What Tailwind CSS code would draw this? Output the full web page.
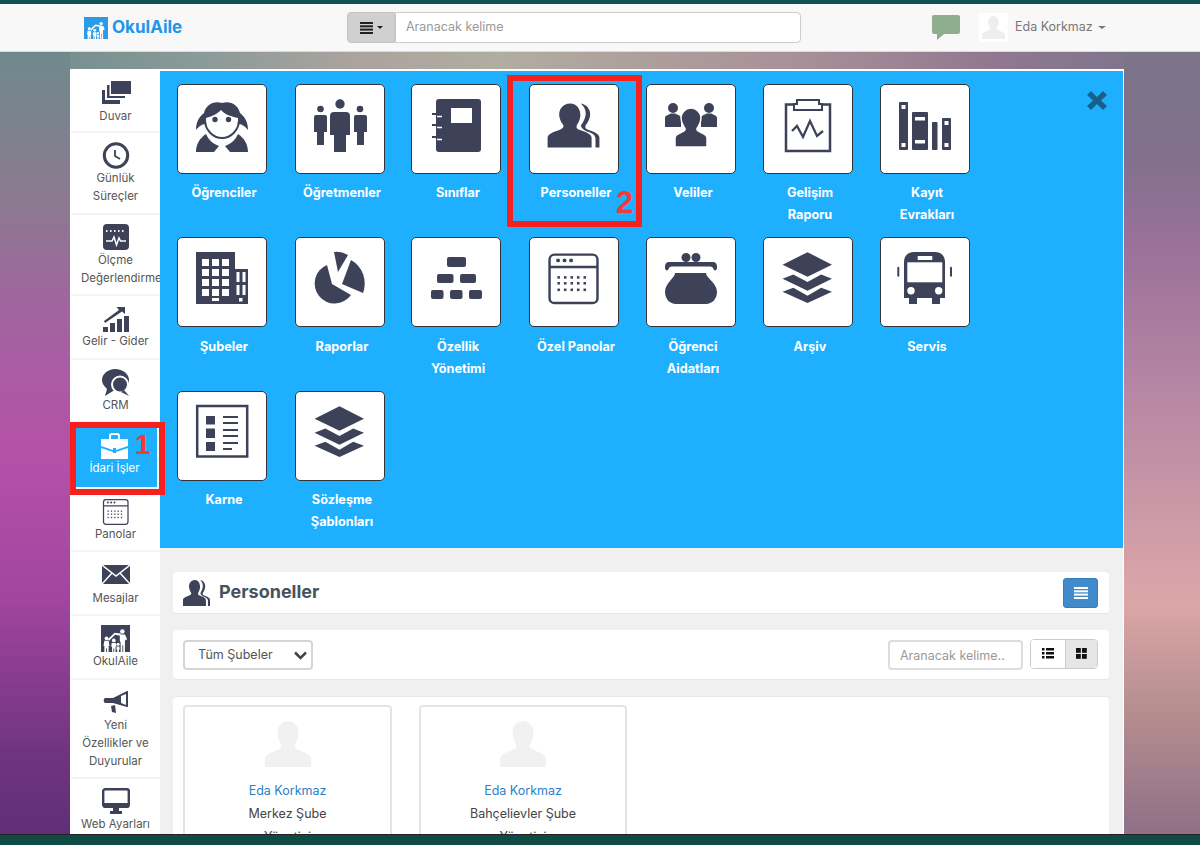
<!DOCTYPE html>
<html lang="tr">
<head>
<meta charset="utf-8">
<title>OkulAile</title>
<script src="https://cdn.jsdelivr.net/npm/@tailwindcss/browser@4"></script>
</head>
<body class="[font-family:Inter,sans-serif]">
<svg width="0" height="0" class="absolute">
  <defs>
    <symbol id="staff" viewBox="0 0 90 90">
      <path d="M18 64V54C18 50 24 48 30 46C33 45 35 43 34 41C31.500 38 30.500 35 30 32C29 26 33 19 41 19C48 19 52 25 51.500 32C51 35 50 38 48 41C47 44 48 45 51 46C57 48 63 50 63 54V64Z"/>
      <path d="M52 19C58 20 62 25 61.500 31C61 35 59 39 57 41C56 44 57 45 60 46C66 48 71 50 71 54V64H67V55C67 50 62 49 57 47C53 45 51 42 53 40C55 37 57 33 57 29C57 25 55 22 52 19Z"/>
    </symbol>
    <symbol id="layers" viewBox="0 0 90 90">
      <path d="M44.500 14.500L69.500 27.300L44.500 39.700L19 27.300Z"/>
      <path d="M19 41.700L30 37.300L44.500 45L58.500 37.300L69.500 41.700L44.500 54Z"/>
      <path d="M19 55L30 51L44.500 59L58.500 51L69.500 55L44.500 66.500Z"/>
    </symbol>
    <symbol id="person" viewBox="0 0 46 46">
      <path d="M0 46V38C0 33 8 31 14 28C17 26.500 17 24 15.500 22C13.500 19 12.500 15 12.500 11C12.500 5 17 0 23 0C29 0 33.500 5 33.500 11C33.500 15 32.500 19 30.500 22C29 24 29 26.500 32 28C38 31 46 33 46 38V46Z"/>
    </symbol>
    <symbol id="family" viewBox="0 0 30 28">
      <circle cx="4.500" cy="12" r="2.200"/><path d="M2 15H7L8 21H7V28H5V24H4V28H2V21H1Z"/>
      <path d="M6 13L14 5.500L21 6.500V9L14.500 8L7.500 15Z"/>
      <circle cx="13" cy="14.500" r="2.200"/><path d="M10.500 17.500H15.500L16 22H15V28H13.500V24H12.500V28H11V22H10Z"/>
      <circle cx="18" cy="19" r="1.800"/><path d="M16.500 21.500H19.500L20 25H19V28H17V25H16Z"/>
      <circle cx="23" cy="4" r="2.600"/><path d="M20 7.500H26L28.500 13L27 14.500L26 13V28H24V20H23V28H21V17L20 15Z"/>
    </symbol>
    <symbol id="calendar" viewBox="0 0 90 90">
      <rect x="20" y="17" width="49" height="49.500" rx="5" fill="none" stroke="currentColor" stroke-width="2.500"/>
      <path d="M20 29.700H69" stroke="currentColor" stroke-width="2.500"/>
      <circle cx="28.700" cy="22.900" r="2"/><circle cx="35.300" cy="22.900" r="2"/><circle cx="42" cy="22.900" r="2"/>
      <g>
        <rect x="28" y="39" width="2.600" height="2.600"/><rect x="34.700" y="39" width="2.600" height="2.600"/><rect x="41.400" y="39" width="2.600" height="2.600"/><rect x="48" y="39" width="2.600" height="2.600"/><rect x="54.700" y="39" width="2.600" height="2.600"/>
        <rect x="28" y="45" width="2.600" height="2.600"/><rect x="34.700" y="45" width="2.600" height="2.600"/><rect x="41.400" y="45" width="2.600" height="2.600"/><rect x="48" y="45" width="2.600" height="2.600"/><rect x="54.700" y="45" width="2.600" height="2.600"/>
        <rect x="28" y="51.700" width="2.600" height="2.600"/><rect x="34.700" y="51.700" width="2.600" height="2.600"/><rect x="41.400" y="51.700" width="2.600" height="2.600"/><rect x="48" y="51.700" width="2.600" height="2.600"/><rect x="54.700" y="51.700" width="2.600" height="2.600"/>
      </g>
    </symbol>
  </defs>
</svg>

<div class="relative flex h-[845px] w-[1200px] flex-col overflow-hidden">
  <div class="h-[4px] shrink-0 bg-[#0e5056]"></div>

  <nav class="flex h-[48px] shrink-0 items-center border-b border-[#dcdcdc] bg-[#f8f8f8]">
    <div class="ml-[84px] flex w-[263px] items-center gap-[4px]">
      <span class="relative block h-[22px] w-[24px] overflow-hidden bg-[#2b9be8]">
        <svg class="absolute bottom-0 left-0 h-[18px] w-[24px] fill-white"><use href="#family"/></svg>
      </span>
      <span class="text-[17px] leading-none font-bold text-[#1f97e8]">OkulAile</span>
    </div>
    <div class="flex h-[31px] w-[454px]">
      <div class="flex w-[48px] items-center justify-center gap-[4px] rounded-l-[4px] border border-[#c4c4c4] bg-[#d0d0d0]">
        <svg width="13" height="12" viewBox="0 0 13 12" class="fill-[#222]"><rect width="13" height="2" /><rect y="3.300" width="13" height="2"/><rect y="6.600" width="13" height="2"/><rect y="10" width="13" height="2"/></svg>
        <span class="h-0 w-0 border-x-[3px] border-t-[3px] border-x-transparent border-t-[#222]"></span>
      </div>
      <input placeholder="Aranacak kelime" class="w-[406px] rounded-r-[4px] border border-[#ccc] bg-white px-[10px] text-[12.500px] outline-none placeholder:text-[#999]">
    </div>
    <svg class="ml-[131px] fill-[#8fae90]" width="28" height="25" viewBox="0 0 28 25"><path d="M2 0H26A2 2 0 0 1 28 2V17A2 2 0 0 1 26 19H12L5 25V19H2A2 2 0 0 1 0 17V2A2 2 0 0 1 2 0Z"/></svg>
    <div class="ml-[19px] flex h-[29px] w-[29px] items-end justify-center bg-white pb-[3px]">
      <svg class="h-[23px] w-[23px] fill-[#eee]"><use href="#person"/></svg>
    </div>
    <span class="ml-[7px] text-[12.500px] text-[#777]">Eda Korkmaz</span>
    <span class="ml-[5px] h-0 w-0 border-x-[4px] border-t-[3px] border-x-transparent border-t-[#777]"></span>
  </nav>

  <main class="min-h-0 flex-1 bg-[linear-gradient(90deg,#6f8a8c_0px,#8a9a98_200px,#aaa39e_350px,#b1ada0_500px,#a89098_800px,#8f7890_1000px,#76738a_1200px)] pl-[70px] pt-[17px]">
    <div class="relative h-[765px] w-[1054px]">
      <div class="absolute -left-[70px] -top-[17px] h-[782px] w-[70px] bg-[linear-gradient(180deg,#6f8a8c_0px,#8c7a90_150px,#a0659f_250px,#b651a8_400px,#a045a0_550px,#70347f_700px,#5f2f78_782px)]"></div>
      <div class="absolute -right-[76px] -top-[17px] h-[782px] w-[76px] bg-[linear-gradient(180deg,#7c7488_0px,#80708c_100px,#9a709a_190px,#b888a4_350px,#dca6a8_550px,#b89090_650px,#8f7088_782px)]"></div>

      <div class="relative flex h-[765px] w-[1054px] overflow-hidden border-x border-t-2 border-x-white border-t-white bg-[#f0f0f0]">
        <aside class="w-[89px] shrink-0 bg-white text-[11.500px] leading-[18px] whitespace-nowrap text-[#555]">
          <div class="h-[62px] border-b-2 border-[#f3f3f3] px-[10px] pt-[9px] text-center">
            <svg class="mx-auto h-[27px] w-[32px] fill-[#3d4258]" viewBox="0 0 32 27"><path d="M11 1H31V14H11Z"/><path d="M7 5H9.500V16H25V18H7Z"/><path d="M2 10H5V20H20V24H2Z"/></svg>
            <div>Duvar</div>
          </div>
          <div class="h-[82px] border-b-2 border-[#f3f3f3] px-[10px] pt-[9px] text-center">
            <svg class="mx-auto h-[27px] w-[28px]" viewBox="0 0 28 27"><circle cx="14" cy="13.500" r="11.700" fill="#fff" stroke="#3d4258" stroke-width="3"/><path d="M13 8V14L18 17" fill="none" stroke="#3d4258" stroke-width="1.800"/></svg>
            <div>Günlük<br>Süreçler</div>
          </div>
          <div class="h-[81px] border-b-2 border-[#f3f3f3] px-[10px] pt-[9px] text-center">
            <svg class="mx-auto h-[27px] w-[28px]" viewBox="0 0 28 27"><rect x="1" y="0" width="26" height="26" rx="4" fill="#3d4258"/><path d="M4 17H10L12 13L14.500 21L17 14L18.500 17H24" fill="none" stroke="#fff" stroke-width="1.500"/><path d="M4 7H24" stroke="#fff" stroke-width="2" stroke-dasharray="1.500 2.500"/></svg>
            <div>Ölçme</div><div>Değerlendirme</div>
          </div>
          <div class="h-[64px] border-b-2 border-[#f3f3f3] px-[10px] pt-[9px] text-center">
            <svg class="mx-auto h-[27px] w-[28px] fill-[#3d4258]" viewBox="0 0 28 27"><rect x="1" y="22" width="5" height="6"/><rect x="8" y="18" width="5" height="10"/><rect x="15" y="14" width="5" height="14"/><rect x="22" y="11" width="5" height="17"/><path d="M2 16L17 5L14.500 2H23V9L20 6.500L3 18Z"/></svg>
            <div>Gelir - Gider</div>
          </div>
          <div class="h-[63px] border-b-2 border-[#f3f3f3] px-[10px] pt-[9px] text-center">
            <svg class="mx-auto h-[27px] w-[28px]" viewBox="0 0 28 27"><path d="M13 0C21 0 27 5 27 11C27 18 20 22 13 22L11 22L3 27L5 20C2 17 0 14.500 0 11C0 5 6 0 13 0Z" fill="#3d4258"/><circle cx="18" cy="15.500" r="8" fill="#3d4258" stroke="#fff" stroke-width="2"/><path d="M22 21L27 27L19 23Z" fill="#3d4258"/></svg>
            <div>CRM</div>
          </div>
          <div class="flex h-[67px] flex-col items-center justify-end border-b-2 border-[#f3f3f3] pb-[1px]">
            <div class="flex h-[60px] w-[83px] flex-col items-center bg-[#1eb0ff] pt-[6px] text-white">
              <svg class="h-[26px] w-[29px] -translate-x-[1px] fill-white" viewBox="0 0 29 26"><path d="M9 6V3C9 1 10 0 12 0H17C19 0 20 1 20 3V6H18V3C18 2.500 17.500 2 17 2H12C11.500 2 11 2.500 11 3V6Z"/><path d="M1 6H28V13L16 17V15H13V17L1 13Z"/><path d="M1 15L13 19V20H16V19L28 15V26H1Z"/></svg>
              <div class="-translate-x-[1px]">İdari İşler</div>
            </div>
          </div>
          <div class="h-[62px] border-b-2 border-[#f3f3f3] px-[10px] pt-[8px] text-center">
            <svg class="mx-auto h-[27px] w-[30px] fill-[#3d4258] text-[#3d4258]" viewBox="17 14 56 54"><use href="#calendar" x="0" y="0" width="90" height="90"/></svg>
            <div>Panolar</div>
          </div>
          <div class="h-[64px] border-b-2 border-[#f3f3f3] px-[10px] pt-[9px] text-center">
            <svg class="mx-auto h-[27px] w-[28px]" viewBox="0 0 28 27"><path d="M0 4H28V23H0Z" fill="#3d4258"/><path d="M0 4L14 15L28 4M0 23L10 12M28 23L18 12" fill="none" stroke="#fff" stroke-width="1.500"/></svg>
            <div class="mt-[1px]">Mesajlar</div>
          </div>
          <div class="h-[64px] border-b-2 border-[#f3f3f3] px-[10px] pt-[9px] text-center">
            <div class="relative mx-auto h-[27px] w-[29px] overflow-hidden bg-[#3d4258]">
              <svg class="absolute bottom-0 left-0 h-[24px] w-[29px] fill-white"><use href="#family"/></svg>
            </div>
            <div>OkulAile</div>
          </div>
          <div class="h-[99px] border-b-2 border-[#f3f3f3] px-[10px] pt-[11px] text-center">
            <svg class="mx-auto h-[24px] w-[26px] fill-[#3d4258]" viewBox="0 0 26 24"><path d="M2 7H10L24 0H25V16H24L10 12H2A3 3 0 0 1 2 7Z"/><path d="M18 5L23 3V14L18 12Z" fill="#fff"/><path d="M8 15L12 14L13 22L9 21Z"/></svg>
            <div class="mt-[1px]">Yeni<br>Özellikler ve<br>Duyurular</div>
          </div>
          <div class="px-[10px] pt-[9px] text-center">
            <svg class="mx-auto h-[27px] w-[28px] fill-[#3d4258]" viewBox="0 0 28 27"><rect x="1.200" y="1.200" width="25.600" height="17.600" rx="2" fill="#fff" stroke="#3d4258" stroke-width="2.400"/><path d="M1 15H27V18A2 2 0 0 1 25 20H3A2 2 0 0 1 1 18Z"/><path d="M11 20H17V23H20V26H8V23H11Z"/></svg>
            <div>Web Ayarları</div>
          </div>
        </aside>

        <div class="min-w-0 flex-1">
          <section class="relative h-[477px] bg-[#1eb0ff] pl-[17px] pt-[13px] text-[12.700px] leading-[22px] font-bold text-white">
            <div class="grid grid-cols-[118px_116px_118px_117px_117px_117px_117px] grid-rows-[153px_154px_auto]">
              <div><div class="h-[90px] w-[90px] rounded-[5px] border border-[#33333a] bg-white"><svg class="h-full w-full fill-[#3d4258]" viewBox="1 1 88 88"><path d="M45 19C36 16.500 29 21 27 29C22 33 19 38 19 46C23 41 26 40 29 40H61C64 40 67 41 71 46C71 38 68 33 63 29C61 21 54 16.500 45 19Z"/><path d="M29 34C33 33 39 31 44 26C48 31 56 33 61 34C62 44 55 53 45 53C36 53 28 44 29 34Z" fill="#fff"/><path d="M28 36C28 46 36 54 45 54C54 54 62 46 62 36" fill="none" stroke="#3d4258" stroke-width="2"/><circle cx="38" cy="35.500" r="2.700"/><circle cx="51.500" cy="35.500" r="2.700"/><path d="M19 68C19 60 23 54 29 50C31 55 36 60 42 62L37 68Z"/><path d="M71 68C71 60 67 54 61 50C59 55 54 60 48 62L53 68Z"/></svg></div><div class="mt-[8px] w-[94px] text-center">Öğrenciler</div></div>
              <div><div class="h-[90px] w-[90px] rounded-[5px] border border-[#33333a] bg-white"><svg class="h-full w-full fill-[#3d4258]" viewBox="0 1 88 88"><circle cx="44" cy="20" r="4.700"/><path d="M38 28H50A4 4 0 0 1 54 32V51H50V68H38V51H34V32A4 4 0 0 1 38 28Z"/><circle cx="24.500" cy="25" r="3.300"/><path d="M20 31H29A2 2 0 0 1 31 33V48H28V61H21V48H18V33A2 2 0 0 1 20 31Z"/><circle cx="64" cy="25" r="3.300"/><path d="M60 31H69A2 2 0 0 1 71 33V48H68V61H61V48H58V33A2 2 0 0 1 60 31Z"/></svg></div><div class="mt-[8px] w-[94px] text-center">Öğretmenler</div></div>
              <div><div class="h-[90px] w-[90px] rounded-[5px] border border-[#33333a] bg-white"><svg class="h-full w-full fill-[#3d4258]" viewBox="1 1 88 88"><rect x="25" y="15" width="45" height="53" rx="3"/><rect x="40" y="24" width="21" height="15" fill="#fff"/><path d="M21 30H31M21 41H31M21 53H31" stroke="#3d4258" stroke-width="2"/><path d="M26 32.500H31M26 43.500H31M26 55.500H31" stroke="#fff" stroke-width="1.500"/></svg></div><div class="mt-[8px] w-[94px] text-center">Sınıflar</div></div>
              <div><div class="h-[90px] w-[90px] rounded-[5px] border border-[#33333a] bg-white"><svg class="h-full w-full fill-[#3d4258]"><use href="#staff"/></svg></div><div class="mt-[8px] w-[94px] text-center">Personeller</div></div>
              <div><div class="h-[90px] w-[90px] rounded-[5px] border border-[#33333a] bg-white"><svg class="h-full w-full fill-[#3d4258]" viewBox="1 1 88 88"><circle cx="27" cy="24" r="5"/><path d="M19 43V34C19 31 23 31 24.500 29.500H29.500C31 31 35 31 35 34L35 43Z"/><circle cx="63" cy="24" r="5"/><path d="M71 43V34C71 31 67 31 65.500 29.500H60.500C59 31 55 31 55 34L55 43Z"/><path d="M29 63V54C29 50 35 49 38 47C39.500 46 39.500 44 38 43C36 40 35 36 35 34C35 29 39 24 45 24C51 24 55 29 55 34C55 36 54 40 52 43C50.500 44 50.500 46 52 47C55 49 61 50 61 54V63Z" stroke="#fff" stroke-width="1.500"/></svg></div><div class="mt-[8px] w-[94px] text-center">Veliler</div></div>
              <div><div class="h-[90px] w-[90px] rounded-[5px] border border-[#33333a] bg-white"><svg class="h-full w-full" viewBox="1 1 88 88" fill="none" stroke="#3d4258"><path d="M30 20.500H23V67H67V20.500H60" stroke-width="2.500"/><path d="M34 16H56V20H59V26H31V20H34Z" stroke-width="2"/><path d="M29 47L34 42L40 53L47 37L54 52L60 47" stroke-width="2.300"/></svg></div><div class="mt-[8px] w-[94px] text-center">Gelişim<br>Raporu</div></div>
              <div><div class="h-[90px] w-[90px] rounded-[5px] border border-[#33333a] bg-white"><svg class="h-full w-full fill-[#3d4258]" viewBox="1 1 88 88"><rect x="19" y="18" width="9" height="48" rx="1"/><rect x="32" y="28" width="16" height="38" rx="1"/><rect x="52" y="38" width="5.500" height="28" rx="1"/><rect x="62" y="34" width="9" height="32" rx="1"/><rect x="21.500" y="21" width="4" height="4" fill="#fff"/><rect x="21.500" y="59" width="4" height="4" fill="#fff"/><rect x="35" y="33" width="10" height="3.500" fill="#fff"/><rect x="35" y="56" width="10" height="3.500" fill="#fff"/><rect x="64.500" y="37" width="4" height="4" fill="#fff"/><rect x="64.500" y="59" width="4" height="4" fill="#fff"/></svg></div><div class="mt-[8px] w-[94px] text-center">Kayıt<br>Evrakları</div></div>

              <div><div class="h-[90px] w-[90px] rounded-[5px] border border-[#33333a] bg-white"><svg class="h-full w-full fill-[#3d4258]" viewBox="1 1 88 88"><path d="M19 15H58V32H71V67H19Z"/><g fill="#fff"><rect x="25" y="22" width="7" height="7"/><rect x="35" y="22" width="7" height="7"/><rect x="45" y="22" width="7" height="7"/><rect x="25" y="32" width="7" height="7"/><rect x="35" y="32" width="7" height="7"/><rect x="45" y="32" width="7" height="7"/><rect x="25" y="42" width="7" height="7"/><rect x="35" y="42" width="7" height="7"/><rect x="45" y="42" width="7" height="7"/><rect x="25" y="52" width="7" height="7"/><rect x="35" y="52" width="7" height="7"/><rect x="45" y="52" width="7" height="7"/><rect x="35" y="61" width="7" height="3"/><rect x="59.500" y="35" width="3" height="10"/><rect x="65.500" y="35" width="3" height="10"/><rect x="59.500" y="48" width="3" height="10"/><rect x="65.500" y="48" width="3" height="10"/><rect x="62" y="61" width="3.500" height="3.500"/></g></svg></div><div class="mt-[9px] w-[94px] text-center">Şubeler</div></div>
              <div><div class="h-[90px] w-[90px] rounded-[5px] border border-[#33333a] bg-white"><svg class="h-full w-full fill-[#3d4258]" viewBox="0 1 88 88"><path d="M36 47L31 28A20 20 0 1 0 55 58Z"/><path d="M55 23A27 27 0 0 1 67 56L46 47Z"/><path d="M38 15Q45 14 52 18L42 35Z"/></svg></div><div class="mt-[9px] w-[94px] text-center">Raporlar</div></div>
              <div><div class="h-[90px] w-[90px] rounded-[5px] border border-[#33333a] bg-white"><svg class="h-full w-full fill-[#3d4258]" viewBox="1 1 88 88"><rect x="36" y="20" width="19" height="10" rx="2"/><rect x="26" y="37" width="16.500" height="9" rx="2"/><rect x="49" y="37" width="16" height="9" rx="2"/><rect x="20" y="53" width="12.500" height="9" rx="2"/><rect x="39" y="53" width="12.500" height="9" rx="2"/><rect x="58" y="53" width="13" height="9" rx="2"/></svg></div><div class="mt-[9px] w-[94px] text-center">Özellik<br>Yönetimi</div></div>
              <div><div class="h-[90px] w-[90px] rounded-[5px] border border-[#33333a] bg-white"><svg class="h-full w-full fill-[#3d4258] text-[#3d4258]"><use href="#calendar"/></svg></div><div class="mt-[9px] w-[94px] text-center">Özel Panolar</div></div>
              <div><div class="h-[90px] w-[90px] rounded-[5px] border border-[#33333a] bg-white"><svg class="h-full w-full fill-[#3d4258]" viewBox="1 1 88 88"><circle cx="40" cy="20.500" r="4.500"/><circle cx="50" cy="20.500" r="4.500"/><path d="M23 25H67C69.500 25 71 27 71 29.500V31C71 33 69 34 68 33C67 30.500 66 29.500 64 29.500H26C24 29.500 23 30.500 22 33C21 34 19 33 19 31V29.500C19 27 20.500 25 23 25Z"/><path d="M29 36H60C60 41 71 46 71 55C71 62 66 67 60 67H30C24 67 19 62 19 55C19 46 29 41 29 36Z"/></svg></div><div class="mt-[9px] w-[94px] text-center">Öğrenci<br>Aidatları</div></div>
              <div><div class="h-[90px] w-[90px] rounded-[5px] border border-[#33333a] bg-white"><svg class="h-full w-full fill-[#3d4258]"><use href="#layers"/></svg></div><div class="mt-[9px] w-[94px] text-center">Arşiv</div></div>
              <div><div class="h-[90px] w-[90px] rounded-[5px] border border-[#33333a] bg-white"><svg class="h-full w-full fill-[#3d4258]" viewBox="1 1 88 88"><path d="M34 15H55C61 15 65 19 65 25V61H60V67H52V61H37V67H29V61H24V25C24 19 28 15 34 15Z"/><rect x="27.300" y="25.300" width="35" height="20" fill="#fff"/><rect x="37.700" y="19" width="14.600" height="4" fill="#fff"/><circle cx="31" cy="53.700" r="3.700" fill="#fff"/><circle cx="58.700" cy="53.700" r="3.700" fill="#fff"/><rect x="17.300" y="29.700" width="2" height="10" rx="1"/><rect x="70" y="29.700" width="2" height="10" rx="1"/></svg></div><div class="mt-[9px] w-[94px] text-center">Servis</div></div>

              <div><div class="h-[90px] w-[90px] rounded-[5px] border border-[#33333a] bg-white"><svg class="h-full w-full" viewBox="1 1 88 88" fill="#3d4258"><rect x="20.200" y="15" width="50" height="50.500" fill="none" stroke="#3d4258" stroke-width="2.500"/><rect x="29" y="25" width="9" height="8.500"/><rect x="29" y="37.500" width="9" height="9.500"/><rect x="29" y="51" width="9" height="9"/><path d="M46 26H61M46 32H61M46 39H61M46 45H61M46 52H61M46 58H55" stroke="#3d4258" stroke-width="2"/></svg></div><div class="mt-[8px] w-[94px] text-center">Karne</div></div>
              <div><div class="h-[90px] w-[90px] rounded-[5px] border border-[#33333a] bg-white"><svg class="h-full w-full fill-[#3d4258]"><use href="#layers"/></svg></div><div class="mt-[8px] w-[94px] text-center">Sözleşme<br>Şablonları</div></div>
            </div>
            <svg class="absolute right-[16px] top-[20px] fill-[#1a5f8c]" width="20" height="19" viewBox="0 0 20 19"><path d="M4 0L10 6L16 0L20 4L14 9.500L20 15L16 19L10 13L4 19L0 15L6 9.500L0 4Z"/></svg>
          </section>

          <section class="flex flex-col gap-[16px] px-[13px] pt-[24px] text-[12.500px] text-[#444]">
            <div class="flex h-[42px] w-[936px] items-center justify-between rounded-[4px] border-b border-[#e6e6e6] bg-white pl-[10px] pr-[11px]">
              <div class="flex items-center gap-[9px]">
                <svg class="h-[26px] w-[27px] fill-[#3d4258]" viewBox="18 19 53 45" preserveAspectRatio="none"><use href="#staff" width="90" height="90"/></svg>
                <span class="pb-[2px] text-[18px] font-bold text-[#46535b]">Personeller</span>
              </div>
              <div class="flex h-[30px] w-[35px] items-center justify-center rounded-[3px] border border-[#357ebd] bg-[#428bca]">
                <svg width="14" height="12" viewBox="0 0 14 12" class="fill-white"><rect width="14" height="2"/><rect y="3.300" width="14" height="2"/><rect y="6.600" width="14" height="2"/><rect y="10" width="14" height="2"/></svg>
              </div>
            </div>
            <div class="flex h-[50px] w-[936px] items-center rounded-[4px] border-b border-[#e6e6e6] bg-white pl-[10px] pr-[11px]">
              <div class="flex h-[30px] w-[130px] items-center justify-between rounded-[4px] border-2 border-[#d5d5d5] pl-[13px] pr-[4px] pt-[1px] text-[#555]">
                <span>Tüm Şubeler</span>
                <svg width="13" height="9" viewBox="0 0 13 9" fill="none" stroke="#444" stroke-width="2.500"><path d="M1 1.500L6.500 7L12 1.500"/></svg>
              </div>
              <input placeholder="Aranacak kelime.." class="ml-auto h-[30px] w-[135px] rounded-[4px] border-2 border-[#ddd] bg-white px-[10px] pt-[1px] text-[12.500px] outline-none placeholder:text-[#999]">
              <div class="ml-[7px] flex h-[30px] w-[68px] -translate-y-[1px] overflow-hidden rounded-[4px] border border-[#ccc]">
                <div class="flex w-[34px] items-center justify-center bg-white">
                  <svg width="12" height="11" viewBox="0 0 12 11" class="fill-[#111]"><rect width="2.500" height="2.500"/><rect x="4" width="8" height="2.500"/><rect y="4" width="2.500" height="2.500"/><rect x="4" y="4" width="8" height="2.500"/><rect y="8" width="2.500" height="2.500"/><rect x="4" y="8" width="8" height="2.500"/></svg>
                </div>
                <div class="flex flex-1 items-center justify-center border-l border-[#ccc] bg-[#e6e6e6]">
                  <svg width="11" height="11" viewBox="0 0 11 11" class="fill-[#111]"><rect width="4.800" height="4.800"/><rect x="6" width="4.800" height="4.800"/><rect y="6" width="4.800" height="4.800"/><rect x="6" y="6" width="4.800" height="4.800"/></svg>
                </div>
              </div>
            </div>
            <div class="flex h-[200px] w-[936px] gap-[27px] rounded-[4px] border-t border-[#e8e8e8] bg-white pl-[10px] pt-[8px] text-center leading-[23px]">
              <div class="h-[150px] w-[209px] rounded-t-[4px] border-2 border-[#e4e4e4] pt-[14px]">
                <svg class="mx-auto h-[46px] w-[46px] fill-[#f1f1f1]"><use href="#person"/></svg>
                <div class="mt-[12px] text-[#2a7fc9]">Eda Korkmaz</div>
                <div>Merkez Şube</div>
                <div>Yönetici</div>
              </div>
              <div class="h-[150px] w-[208px] rounded-t-[4px] border-2 border-[#e4e4e4] pt-[14px]">
                <svg class="mx-auto h-[46px] w-[46px] fill-[#f1f1f1]"><use href="#person"/></svg>
                <div class="mt-[12px] text-[#2a7fc9]">Eda Korkmaz</div>
                <div>Bahçelievler Şube</div>
                <div>Yönetici</div>
              </div>
            </div>
          </section>
        </div>
      </div>
    </div>
  </main>

  <div class="h-[11px] shrink-0 border-t border-[#222] bg-[#0f4a44]"></div>

  <div class="absolute left-[70px] top-[422px] h-[73px] w-[95px] border-[6px] border-[#f5211f]"></div>
  <span class="absolute left-[135px] top-[428px] [font-family:'Liberation_Sans',sans-serif] text-[28px] leading-[34px] font-bold text-[#ee3c3c]">1</span>
  <div class="absolute left-[507px] top-[75px] h-[152px] w-[135px] border-[6px] border-[#f5211f]"></div>
  <span class="absolute left-[616px] top-[185px] [font-family:'Liberation_Sans',sans-serif] text-[31px] leading-[36px] font-bold text-[#ee3c3c]">2</span>
</div>
</body>
</html>
